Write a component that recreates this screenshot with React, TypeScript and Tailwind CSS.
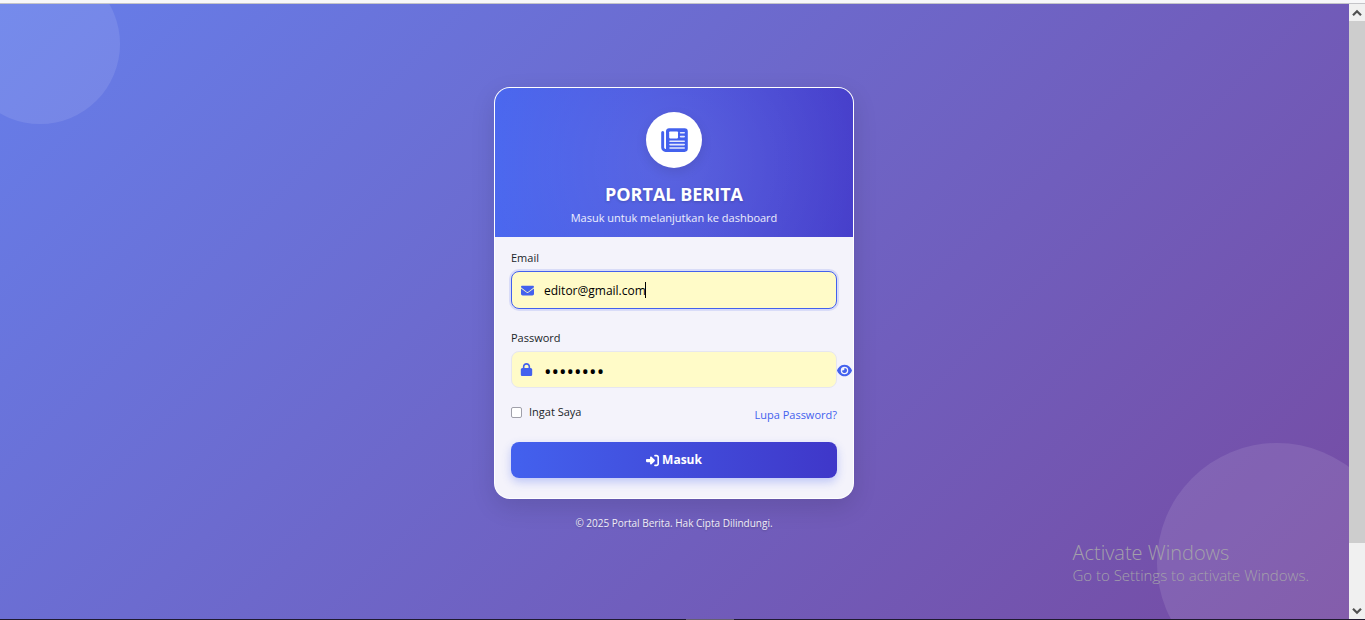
import { useState } from "react";
import { FaEnvelope, FaEye, FaEyeSlash, FaLock, FaRightToBracket } from "react-icons/fa6";

function Scrollbar() {
  return (
    <div aria-hidden="true" className="flex w-4 shrink-0 flex-col bg-[#f0f0f0]">
      <div className="flex h-[17px] items-center justify-center">
        <svg viewBox="0 0 10 8" className="h-2 w-[10px]" fill="none" stroke="#505050" strokeWidth="2.2">
          <path d="M1 6.2 5 2.2l4 4" />
        </svg>
      </div>
      <div className="flex flex-1 flex-col">
        <div className="flex-[522] bg-[#cdcdcd]" />
        <div className="flex-[59]" />
      </div>
      <div className="flex h-[17px] items-center justify-center">
        <svg viewBox="0 0 10 8" className="h-2 w-[10px]" fill="none" stroke="#505050" strokeWidth="2.2">
          <path d="M1 1.8l4 4 4-4" />
        </svg>
      </div>
    </div>
  );
}

function NewspaperIcon() {
  return (
    <svg viewBox="0 0 27 24" className="h-6 w-[27px]" fill="none" aria-hidden="true">
      <path
        d="M1.7 4.4V19.5a2.9 2.9 0 0 0 2.9 2.9H23"
        stroke="currentColor"
        strokeWidth="3"
        strokeLinecap="round"
      />
      <path
        fill="currentColor"
        d="M8 .2h15.6A3.2 3.2 0 0 1 26.8 3.4v17.2a3.2 3.2 0 0 1-3.2 3.2H4.6c1 0 .4-.9.4-1.8V3.4A3.2 3.2 0 0 1 8 .2z"
      />
      <rect x="8.2" y="3.4" width="8.8" height="7" rx=".8" fill="white" />
      <path
        stroke="white"
        strokeOpacity=".85"
        strokeWidth="1.6"
        strokeLinecap="round"
        d="M19.6 4.8h3.6M19.6 8.6h3.6M9 13.2h14.2M9 16.6h14.2M9 20h14.2"
      />
      <path stroke="white" strokeWidth="1" d="M4.2 3.4v16.4" />
    </svg>
  );
}

function CardHeader() {
  return (
    <header className="flex flex-col items-center bg-[radial-gradient(circle_400px_at_50%_50%,rgba(255,255,255,0.13),transparent_70%),linear-gradient(90deg,#4361ee,#3f37c9)] px-4 pt-6 pb-[10px] text-white">
      <div className="flex size-14 items-center justify-center rounded-full bg-white text-[#4361ee] shadow-[0_4px_12px_rgba(0,0,0,0.1)]">
        <NewspaperIcon />
      </div>
      <h1 className="mt-[15px] text-lg leading-[22px] font-bold [text-shadow:0_1px_3px_rgba(0,0,0,0.2)]">
        PORTAL BERITA
      </h1>
      <p className="mt-1 text-[11px] leading-[18px] text-white/90">
        Masuk untuk melanjutkan ke dashboard
      </p>
    </header>
  );
}

function LoginForm() {
  const [email, setEmail] = useState("editor@gmail.com");
  const [visible, setVisible] = useState(false);
  const fieldClass = "block w-full rounded-lg border bg-[#fffbc8] pr-3 pl-8 text-black outline-none";
  return (
    <form className="px-4 pt-3 pb-5" onSubmit={(e) => e.preventDefault()}>
      <label htmlFor="email" className="block text-[11px] leading-[18px]">
        Email
      </label>
      <div className="relative mt-1">
        <FaEnvelope className="absolute top-[13px] left-[10px] size-[13px] text-[#4361ee]" />
        <input
          id="email"
          type="email"
          autoFocus
          value={email}
          onChange={(e) => setEmail(e.target.value)}
          className={`${fieldClass} h-[38px] border-[#4361ee] text-[12px] shadow-[0_0_0_2px_rgba(67,97,238,0.15)]`}
        />
        {email === "editor@gmail.com" && (
          <span aria-hidden="true" className="absolute top-[11px] left-[134px] h-4 w-px bg-black" />
        )}
      </div>
      <label htmlFor="password" className="mt-5 block text-[11px] leading-[18px]">
        Password
      </label>
      <div className="relative mt-1">
        <FaLock className="absolute top-3 left-[9px] size-[13px] text-[#4361ee]" />
        <input
          id="password"
          type={visible ? "text" : "password"}
          defaultValue="editor12"
          className={`${fieldClass} h-[37px] border-[#e6e6f0] ${visible ? "text-[12px]" : "pt-[3px] text-[20px]"}`}
        />
        <button
          type="button"
          aria-label="Tampilkan password"
          onClick={() => setVisible(!visible)}
          className="absolute top-3 left-full text-[#4361ee]"
        >
          {visible ? <FaEyeSlash className="size-[15px]" /> : <FaEye className="size-[15px]" />}
        </button>
      </div>
      <div className="mt-[15px] flex items-start justify-between text-[11px] leading-[18px]">
        <label htmlFor="remember" className="flex items-center gap-[7px]">
          <input
            id="remember"
            type="checkbox"
            className="size-[11px] appearance-none rounded-[2px] border border-[#a0a0aa] bg-white checked:bg-[#4361ee]"
          />
          Ingat Saya
        </label>
        <a href="#lupa" className="pt-[3px] text-[#4361ee]">
          Lupa Password?
        </a>
      </div>
      <button
        type="submit"
        className="mt-[18px] flex h-9 w-full items-center justify-center gap-[3px] rounded-lg bg-linear-to-r from-[#4361ee] to-[#3f37c9] text-[12px] font-bold text-white shadow-[0_4px_10px_rgba(67,97,238,0.3)]"
      >
        <FaRightToBracket className="size-[13px]" />
        Masuk
      </button>
    </form>
  );
}

export default function App() {
  return (
    <div className="flex min-h-screen flex-col font-['Open_Sans','Noto_Sans',sans-serif] text-[#212529]">
      <div className="h-1 border-b border-[#c4c4c8] bg-[#f7f7f9]" />
      <div className="flex flex-1">
        <main className="relative flex flex-1 flex-col items-center overflow-hidden bg-linear-[135deg,#667eea,#764ba2] pt-[83px] pr-[17px] pb-16 pl-4">
          <div className="absolute -top-10 -left-10 size-40 rounded-full bg-white/10" />
          <div className="absolute -right-12 -bottom-16 size-60 rounded-full bg-white/10" />
          <section className="relative w-full max-w-[360px] overflow-hidden rounded-2xl border border-white/90 bg-[#f4f3fb] shadow-[0_8px_24px_rgba(0,0,0,0.12)]">
            <CardHeader />
            <LoginForm />
          </section>
          <footer className="relative mt-4 text-[10px] leading-4 text-white/90 [text-shadow:0_1px_2px_rgba(0,0,0,0.2)]">
            © 2025 Portal Berita. Hak Cipta Dilindungi.
          </footer>
          <div className="pointer-events-none absolute right-10 bottom-[34px] text-[#a3a0aa]">
            <p className="text-[20px] leading-6 font-light">Activate Windows</p>
            <p className="text-[15px] leading-5 font-light">Go to Settings to activate Windows.</p>
          </div>
        </main>
        <Scrollbar />
      </div>
      <div className="flex h-px justify-center bg-[#1f1a2e]">
        <div className="ml-[55px] w-12 bg-[#66606f]" />
      </div>
    </div>
  );
}
